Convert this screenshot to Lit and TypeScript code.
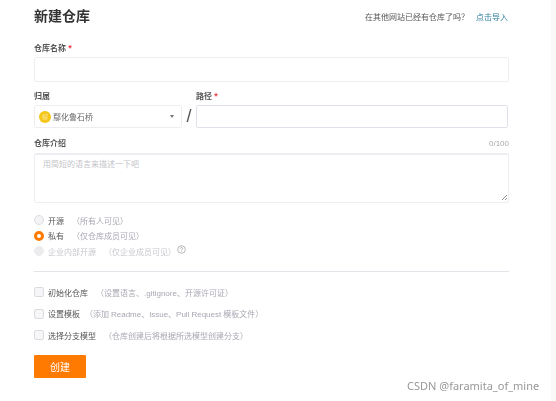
import { LitElement, html, css } from "lit";
import { customElement } from "lit/decorators.js";

@customElement("app-root")
export class AppRoot extends LitElement {
  static styles = css`
    :host { display: block; width: 556px; height: 401px; position: relative; overflow: hidden; background: #fff;
      font-family: "Liberation Sans", "Noto Sans CJK SC", sans-serif; }
    .strip { position: absolute; top: 0; right: 0; bottom: 0; width: 5px; background: #f9f9fa; }
    .page { box-sizing: border-box; width: 475px; margin-left: 34px; padding-top: 6px; display: flex; flex-direction: column; filter: blur(0.4px); }
    .head { display: flex; justify-content: space-between; align-items: center; height: 21px; }
    h1 { margin: 0; font-size: 14px; line-height: 21px; font-weight: 700; color: #333; }
    .import { font-size: 8px; color: #555; margin-right: 1px; }
    .import a { color: #2f7f9f; margin-left: 7px; }
    .label { font-size: 8px; height: 12px; line-height: 12px; font-weight: 700; color: #555; }
    .req { color: #ee3a44; font-size: 9px; line-height: 0; }
    .box { box-sizing: border-box; border: 1px solid #eeeef2; border-radius: 2px; background: #fff; }
    .f1 { margin-top: 16px; }
    .name { height: 25px; margin-top: 2px; }
    .row { display: flex; margin-top: 9px; align-items: flex-end; }
    .owner { width: 148px; flex: none; }
    .select { height: 23px; margin-top: 2px; display: flex; align-items: center; padding: 0 4px; gap: 2px; font-size: 8px; color: #666; }
    .av { width: 12px; height: 12px; border-radius: 50%; background: #f5c518; display: flex; align-items: center; justify-content: center; font-size: 6px; color: #fbe89a; flex: none; }
    .caret { margin-left: auto; margin-right: 3px; width: 0; height: 0; border: 2px solid transparent; border-top: 3px solid #777; border-bottom: 0; }
    .slash { width: 14px; flex: none; text-align: center; font-size: 18px; line-height: 23px; color: #555; font-weight: 400; }
    .path { flex: 1; margin-right: 1px; }
    .path .select { border-color: #e0e1e8; padding: 0; }
    .top { display: flex; justify-content: space-between; margin-top: 10px; }
    .count { font-size: 8px; line-height: 12px; color: #aaa; }
    .ta { height: 50px; margin-top: 3px; position: relative; padding: 4px 8px; font-size: 8px; line-height: 12px; color: #c4c4c8; border-top-width: 2px; }
    .grip { position: absolute; right: 0; bottom: 1px; }
    .radios { margin-top: 11px; display: flex; flex-direction: column; gap: 3.5px; }
    .opt { display: flex; align-items: center; height: 12px; font-size: 8px; color: #555; }
    .radio { width: 10px; height: 10px; box-sizing: border-box; border-radius: 50%; border: 1px solid #dcdce0; background: #f4f4f6; margin-right: 4px; flex: none; }
    .radio.on { background: #fff; border: 3px solid #ff7a00; }
    .radio.off { background: #ececee; border-color: #ececee; }
    .hint { color: #a8a8b4; margin-left: 8px; }
    .opt.dis { color: #c8c8ce; }
    .opt.dis .hint { color: #c8c8ce; }
    .q { margin-left: 1px; margin-top: -3px; }
    hr { border: 0; height: 1px; background: #e2e4ea; margin: 14px 0 0; }
    .checks { margin-top: 14px; display: flex; flex-direction: column; gap: 9.5px; }
    .opt.c { height: 12px; }
    .cb { width: 10px; height: 10px; box-sizing: border-box; border-radius: 2px; border: 1px solid #dcdce0; background: #f6f6f8; margin-right: 4px; flex: none; }
    .hint.tight { margin-left: 5px; letter-spacing: -0.03px; }
    .create { box-sizing: border-box; width: 52px; height: 23px; margin-top: 14px; background: #ff7a00; color: #fff; border: 0; border-radius: 1px; padding: 0; font: 400 10px/23px "Noto Sans CJK SC", sans-serif; }
    .mark { position: absolute; left: 407px; top: 378px; font-size: 11px; line-height: 16px; color: #989898; font-family: "Noto Sans", sans-serif; }
  `;

  render() {
    return html`
      <div class="strip"></div>
      <div class="page">
        <div class="head">
          <h1>新建仓库</h1>
          <div class="import">在其他网站已经有仓库了吗？<a>点击导入</a></div>
        </div>
        <div class="label f1">仓库名称 <span class="req">*</span></div>
        <div class="box name"></div>
        <div class="row">
          <div class="owner">
            <div class="label">归属</div>
            <div class="box select"><span class="av">鄢</span><span>鄢化鲁石桥</span><span class="caret"></span></div>
          </div>
          <div class="slash">/</div>
          <div class="path">
            <div class="label">路径 <span class="req">*</span></div>
            <div class="box select"></div>
          </div>
        </div>
        <div class="top"><div class="label">仓库介绍</div><div class="count">0/100</div></div>
        <div class="box ta">用简短的语言来描述一下吧
          <svg class="grip" width="7" height="7" viewBox="0 0 7 7"><path d="M1 6 6 1M4 6 6 4" stroke="#777" stroke-width=".8" fill="none"/></svg>
        </div>
        <div class="radios">
          <div class="opt"><span class="radio"></span>开源<span class="hint">（所有人可见）</span></div>
          <div class="opt"><span class="radio on"></span>私有<span class="hint">（仅仓库成员可见）</span></div>
          <div class="opt dis"><span class="radio off"></span>企业内部开源<span class="hint">（仅企业成员可见）</span>
            <svg class="q" width="9" height="9" viewBox="0 0 9 9"><circle cx="4.5" cy="4.5" r="3.8" fill="none" stroke="#999" stroke-width=".7"/><path d="M3.3 3.6a1.2 1.2 0 1 1 1.8 1c-.4.3-.6.4-.6.9M4.5 6.4v.6" fill="none" stroke="#999" stroke-width=".7"/></svg>
          </div>
        </div>
        <hr />
        <div class="checks">
          <div class="opt c"><span class="cb"></span>初始化仓库<span class="hint">（设置语言、.gitignore、开源许可证）</span></div>
          <div class="opt c"><span class="cb"></span>设置模板<span class="hint tight">（添加 Readme、Issue、Pull Request 模板文件）</span></div>
          <div class="opt c"><span class="cb"></span>选择分支模型<span class="hint">（仓库创建后将根据所选模型创建分支）</span></div>
        </div>
        <button class="create">创建</button>
      </div>
      <div class="mark">CSDN @faramita_of_mine</div>
    `;
  }
}
